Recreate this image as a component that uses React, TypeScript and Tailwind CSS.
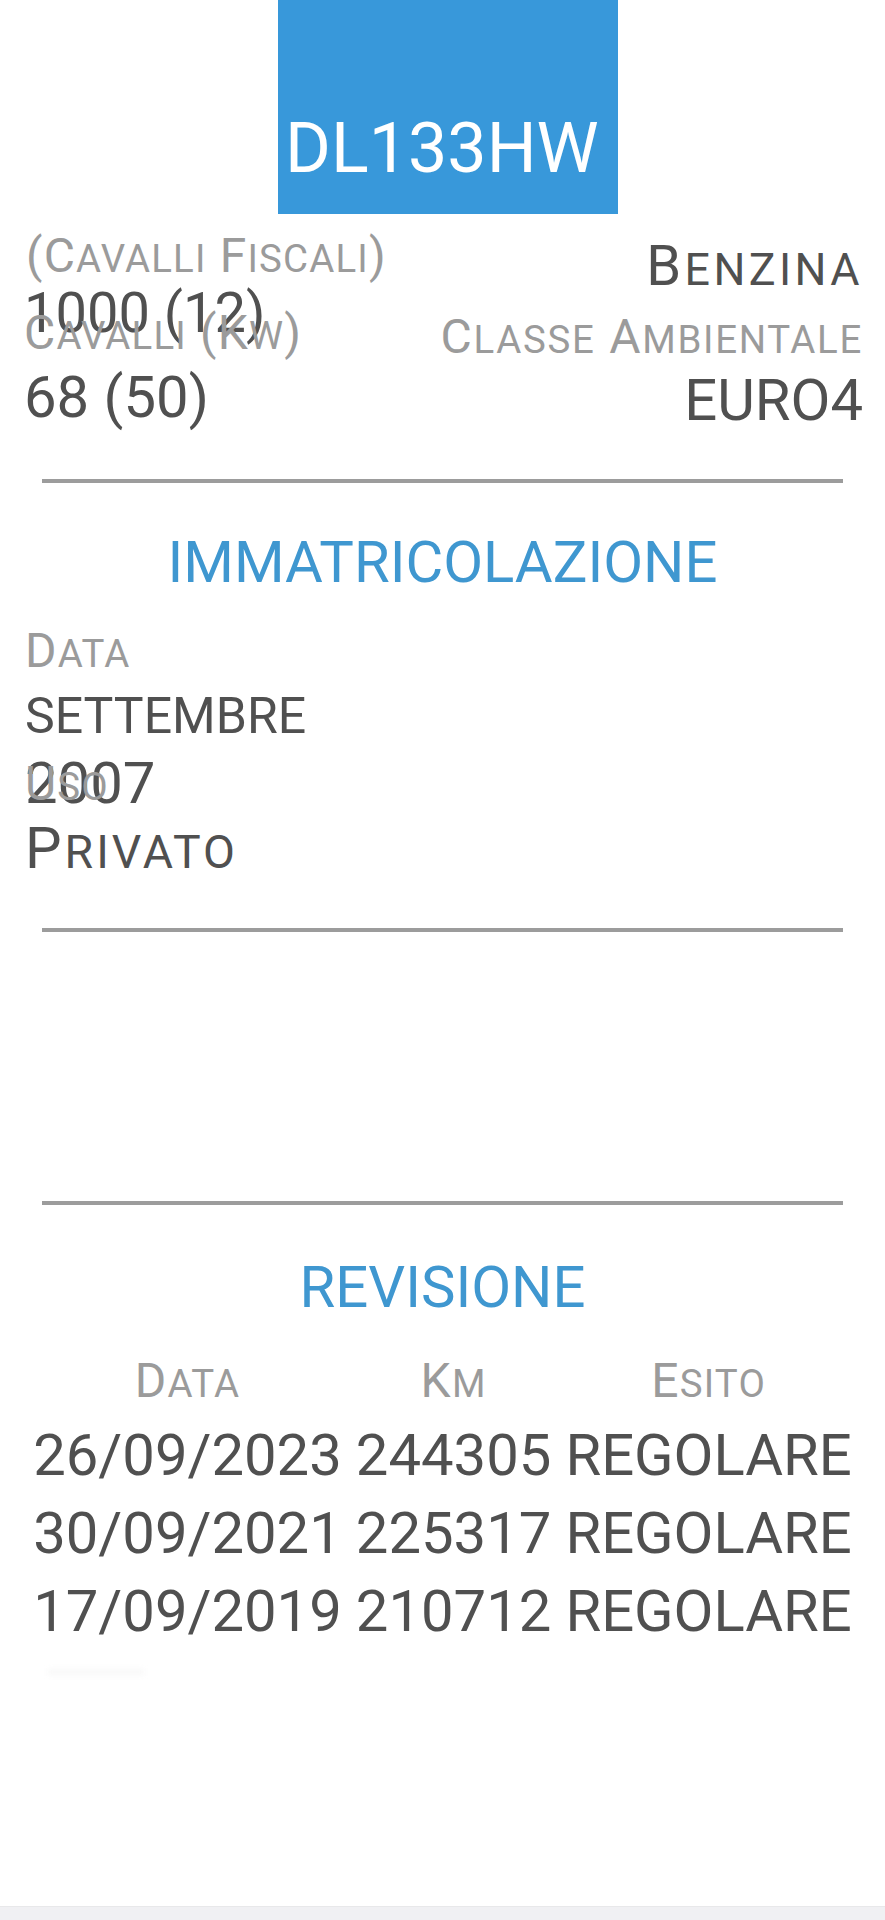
import { twMerge } from "tailwind-merge";
import clsx, { ClassValue } from "clsx";

type Revisione = {
  data: string;
  km: string;
  esito: string;
};

const revisioni: Revisione[] = [
  { data: "26/09/2023", km: "244305", esito: "REGOLARE" },
  { data: "30/09/2021", km: "225317", esito: "REGOLARE" },
  { data: "17/09/2019", km: "210712", esito: "REGOLARE" },
];

function cn(...inputs: ClassValue[]) {
  return twMerge(clsx(inputs));
}

// lowercase runs are drawn as smaller capitals, like font-variant: small-caps
function SmallCaps({ text }: { text: string }) {
  const parts = text.split(/([a-zà-ù]+)/);
  return (
    <>
      {parts.map((p, i) =>
        /[a-zà-ù]/.test(p) ? (
          <span key={i} className="text-[0.8em] uppercase">
            {p}
          </span>
        ) : (
          <span key={i}>{p}</span>
        )
      )}
    </>
  );
}

function Label({ text, className }: { text: string; className?: string }) {
  return (
    <div className={cn("text-[48px] leading-none tracking-[1.2px] text-[#9b9b9b]", className)}>
      <SmallCaps text={text} />
    </div>
  );
}

function Value({ children, className }: { children: React.ReactNode; className?: string }) {
  return <div className={cn("text-[58px] leading-none text-[#505050]", className)}>{children}</div>;
}

function Divider({ className }: { className?: string }) {
  return <div className={cn("mx-[42px] h-[4px] bg-[#9c9c9c]", className)} />;
}

function SectionTitle({ children, className }: { children: React.ReactNode; className?: string }) {
  return (
    <div className={cn("text-center text-[58px] leading-none text-[#3f97d0]", className)}>
      {children}
    </div>
  );
}

export default function App() {
  return (
    <div className="flex min-h-[1920px] w-full flex-col bg-white [font-family:Roboto,sans-serif]">
      {/* plate header */}
      <div className="h-[233px]">
        <div className="ml-[278px] flex h-[214px] w-[340px] items-end bg-[#3898da] pb-[31px] pl-[7px] text-[70px] leading-none text-white">
          DL133HW
        </div>
      </div>

      {/* dati tecnici */}
      <div className="flex justify-between pl-[24px] pr-[22px]">
        <div className="flex flex-col items-start">
          <Label text="(Cavalli Fiscali)" className="-mt-[1px] ml-[2px]" />
          <Value className="mt-[5px] text-[56px] leading-none">1000 (12)</Value>
          <Label text="Cavalli (Kw)" className="-mt-[32px]" />
          <Value className="mt-[11px]">68 (50)</Value>
        </div>
        <div className="flex flex-col items-end">
          <Value className="mt-[5px] text-[56px] leading-none tracking-[3.4px]">
            <SmallCaps text="Benzina" />
          </Value>
          <Label text="Classe Ambientale" className="mt-[19px] tracking-[1.7px]" />
          <Value className="mt-[10px]">EURO4</Value>
        </div>
      </div>

      <Divider className="mt-[50px]" />

      {/* immatricolazione */}
      <SectionTitle className="mt-[50px]">IMMATRICOLAZIONE</SectionTitle>
      <div className="flex flex-col items-start pl-[25px]">
        <Label text="Data" className="mt-[36px]" />
        <Value className="mt-[16px] text-[50px] leading-none">SETTEMBRE</Value>
        <Value className="mt-[13px]">2007</Value>
        <Label text="Uso" className="-mt-[52px]" />
        <Value className="mt-[11px] tracking-[3px]">
          <SmallCaps text="Privato" />
        </Value>
      </div>

      <Divider className="mt-[51px]" />
      <Divider className="mt-[269px]" />

      {/* revisione */}
      <SectionTitle className="mt-[53px]">REVISIONE</SectionTitle>
      <div className="mt-[41px] grid grid-cols-[auto_auto_auto] justify-center gap-x-[14px] text-center">
        <Label text="Data" />
        <Label text="Km" />
        <Label text="Esito" />
        {revisioni.map((r, i) => (
          <div key={i} className="contents">
            <Value className={cn("leading-[78px]", i === 0 && "mt-[11px]")}>{r.data}</Value>
            <Value className={cn("leading-[78px]", i === 0 && "mt-[11px]")}>{r.km}</Value>
            <Value className={cn("leading-[78px]", i === 0 && "mt-[11px]")}>{r.esito}</Value>
          </div>
        ))}
      </div>

      <div className="ml-[48px] mt-[18px] h-[8px] w-[96px] bg-[#fafafa] blur-[2px]" />

      <div className="flex-1" />
      <div className="h-[14px] border-t border-[#e8e8ea] bg-[#f0f0f3]" />
    </div>
  );
}
